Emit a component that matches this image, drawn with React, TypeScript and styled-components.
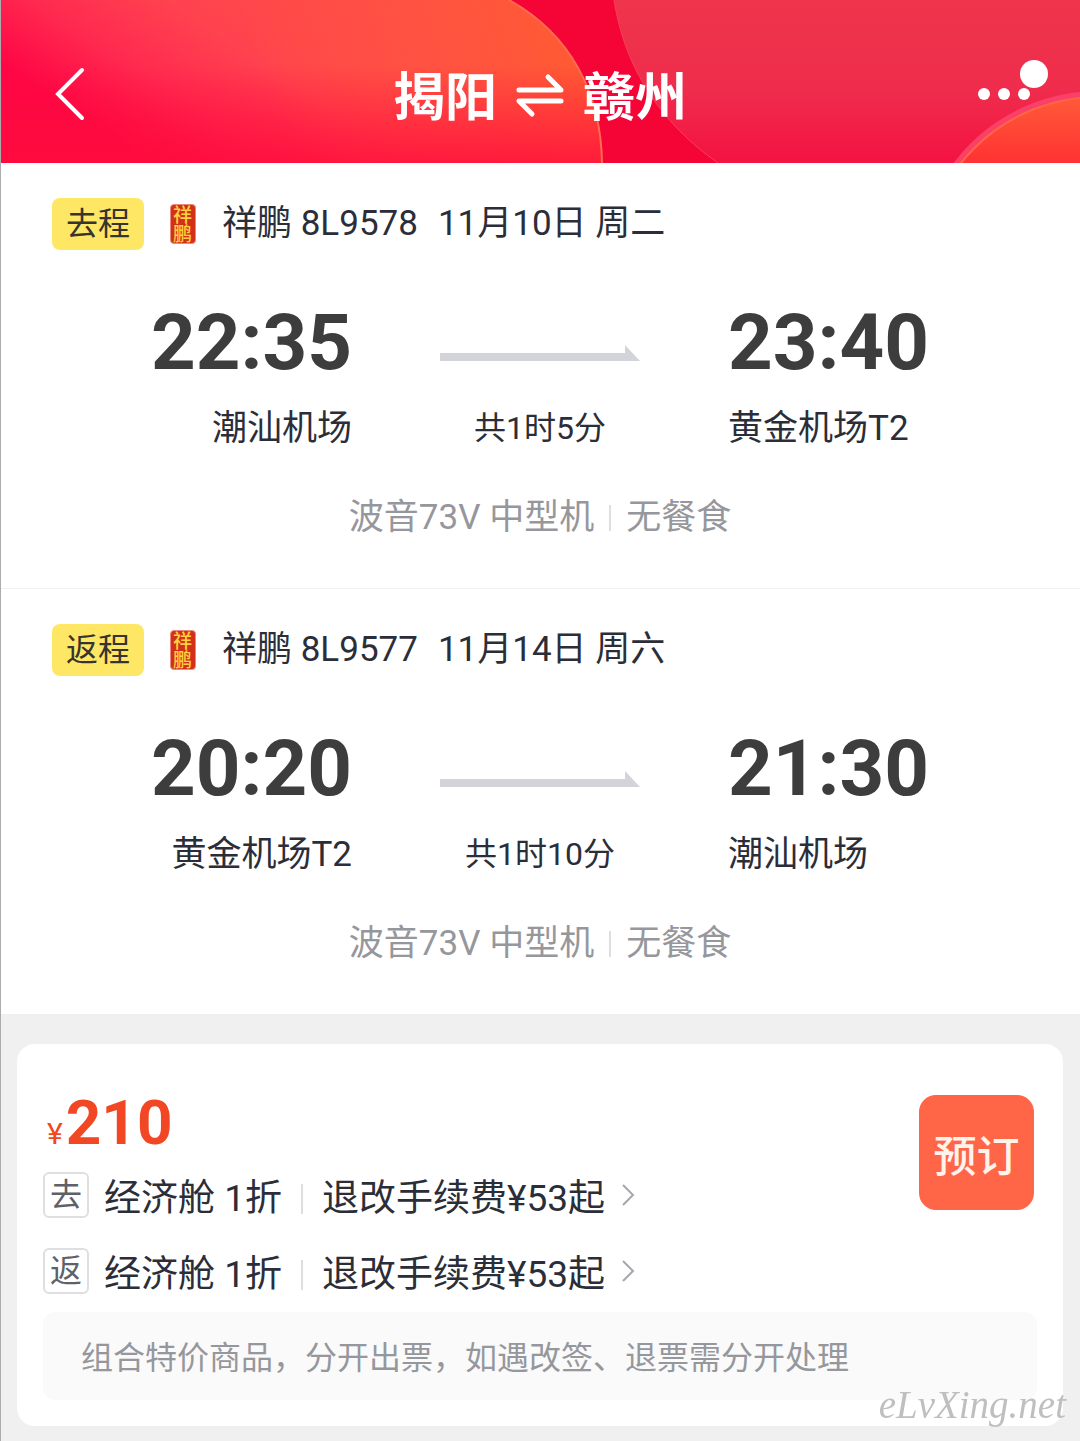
import React from "react";
import styled, { createGlobalStyle } from "styled-components";

const Global = createGlobalStyle`
  *, *::before, *::after { box-sizing: border-box; }
  html { background: #f0f0f0; }
  body { margin: 0; }
  body, button { font-family: Roboto, "Noto Sans CJK SC", sans-serif; }
  button { border: 0; padding: 0; background: none; color: inherit; cursor: pointer; }
  h1, h2, p { margin: 0; font-weight: 400; }
`;

const Page = styled.div`
  position: relative;
  min-height: 100vh;
  background: #f0f0f0;
  color: #2b2e38;

  &::before {
    content: "";
    position: absolute;
    inset: 0 auto 0 0;
    z-index: 1;
    width: 1px;
    background: #acacb0;
  }
`;

const Header = styled.header`
  position: relative;
  display: grid;
  grid-template-columns: 1fr auto 1fr;
  align-items: center;
  height: 163px;
  padding: 34px 32px 0;
  overflow: hidden;
  background: #f50436;
  color: #fff;
`;

const Backdrop = styled.svg`
  position: absolute;
  inset: 0;
  width: 100%;
  height: 100%;
`;

const BackButton = styled.button`
  position: relative;
  justify-self: start;
  display: flex;
`;

const Title = styled.h1`
  position: relative;
  display: flex;
  align-items: center;
  gap: 18px;
  font-size: 52px;
  line-height: 60px;
  font-weight: 700;
`;

const MoreButton = styled.button`
  position: relative;
  justify-self: end;
  display: flex;
`;

const Leg = styled.section`
  display: flex;
  flex-direction: column;
  height: 426px;
  border-bottom: 1px solid #eef0f1;
  background: #fff;
`;

const LegHead = styled.div`
  display: flex;
  align-items: center;
  padding: 35px 52px 0;
`;

const Tag = styled.span`
  padding: 1px 14px 0;
  border-radius: 8px;
  background: #fee765;
  color: #35342e;
  font-size: 32px;
  line-height: 51px;
`;

const Seal = styled.span`
  width: 26px;
  height: 40px;
  margin: 0 26px;
  border: 1px solid #e98a7c;
  border-radius: 4px;
  background: #d3301c;
  color: #ffd23c;
  font-size: 19px;
  line-height: 29px;
  font-weight: 500;
  writing-mode: vertical-rl;
`;

const FlightName = styled.h2`
  display: flex;
  gap: 20px;
  font-size: 35px;
  line-height: 48px;
`;

const Route = styled.div`
  display: grid;
  grid-template-columns: 1fr 200px 1fr;
  column-gap: 88px;
  padding-top: 47px;
`;

const Stop = styled.div<{ $end?: boolean }>`
  text-align: ${(p) => (p.$end ? "left" : "right")};
`;

const Time = styled.p`
  color: #3d3d3d;
  font-size: 78px;
  line-height: 92px;
  font-weight: 700;
`;

const Airport = styled.p`
  padding-top: 16px;
  font-size: 35px;
  line-height: 48px;
`;

const Middle = styled.div`
  display: flex;
  flex-direction: column;
  align-items: center;
  padding-top: 48px;
`;

const Duration = styled.p`
  padding-top: 43px;
  font-size: 32px;
  line-height: 48px;
  white-space: nowrap;
`;

const Plane = styled.p`
  display: flex;
  justify-content: center;
  align-items: center;
  gap: 15px;
  padding-top: 41px;
  color: #96979c;
  font-size: 35px;
  line-height: 48px;
`;

const Rule = styled.span<{ $tall?: boolean }>`
  width: 2px;
  height: ${(p) => (p.$tall ? 30 : 26)}px;
  background: #dddee2;
`;

const Card = styled.main`
  margin: 29px 17px 15px;
  padding: 51px 26px 26px;
  border-radius: 18px;
  background: #fff;
`;

const Offer = styled.div`
  display: flex;
  justify-content: space-between;
`;

const Price = styled.p`
  padding: 0 0 6px 4px;
  color: #f24724;
  font-size: 62px;
  line-height: 56px;
  font-weight: 700;
`;

const Yen = styled.span`
  margin-right: 3px;
  font-size: 30px;
  line-height: 30px;
  font-weight: 400;
`;

const Fare = styled.button`
  display: flex;
  align-items: center;
  height: 76px;
`;

const FareTag = styled.span`
  width: 46px;
  height: 46px;
  margin-right: 15px;
  border: 2px solid #dddfe3;
  border-radius: 6px;
  color: #5f6168;
  font-size: 32px;
  line-height: 42px;
  text-align: center;
`;

const FareText = styled.span`
  display: flex;
  align-items: center;
  gap: 19px;
  padding-top: 8px;
  font-size: 37px;
  line-height: 52px;
`;

const Chevron = styled.svg`
  margin-left: 16px;
`;

const BookButton = styled.button`
  width: 115px;
  height: 115px;
  margin-right: 3px;
  border-radius: 17px;
  background: #ff6648;
  color: #fff3ec;
  font-size: 43px;
  font-weight: 500;
`;

const Notice = styled.p`
  margin-top: 3px;
  padding: 22px 38px 18px;
  border-radius: 12px;
  background: #fafafa;
  color: #96979c;
  font-size: 32px;
  line-height: 48px;
`;

const Watermark = styled.span`
  position: fixed;
  right: 14px;
  bottom: 12px;
  color: #bfbfbf;
  font-family: "Liberation Serif", serif;
  font-style: italic;
  font-size: 39px;
  line-height: 48px;
`;

type LegInfo = {
  tag: string;
  flight: string;
  date: string;
  from: [string, string];
  to: [string, string];
  duration: string;
};

const legs: LegInfo[] = [
  {
    tag: "去程",
    flight: "祥鹏 8L9578",
    date: "11月10日 周二",
    from: ["22:35", "潮汕机场"],
    to: ["23:40", "黄金机场T2"],
    duration: "共1时5分",
  },
  {
    tag: "返程",
    flight: "祥鹏 8L9577",
    date: "11月14日 周六",
    from: ["20:20", "黄金机场T2"],
    to: ["21:30", "潮汕机场"],
    duration: "共1时10分",
  },
];

function HeaderArt() {
  return (
    <Backdrop viewBox="0 0 1080 163" preserveAspectRatio="xMidYMid slice" aria-hidden="true">
      <defs>
        <linearGradient id="orb" gradientUnits="userSpaceOnUse" x1="130" y1="150" x2="230" y2="0">
          <stop offset="0" stopColor="#fe0645" />
          <stop offset=".4" stopColor="#ff2a4f" />
          <stop offset=".8" stopColor="#ff424f" />
          <stop offset="1" stopColor="#ff464c" />
        </linearGradient>
        <linearGradient id="warm" gradientUnits="userSpaceOnUse" x1="270" y1="110" x2="560" y2="20">
          <stop offset="0" stopColor="#ff5a3c" stopOpacity="0" />
          <stop offset=".5" stopColor="#ff583e" stopOpacity=".65" />
          <stop offset="1" stopColor="#ff5a34" />
        </linearGradient>
        <linearGradient id="base" x1="0" y1="0" x2="0" y2="1">
          <stop offset=".4" stopColor="#ff0c3c" stopOpacity="0" />
          <stop offset="1" stopColor="#ff0c3c" stopOpacity=".8" />
        </linearGradient>
        <linearGradient id="rose" x1="0" y1="0" x2="0" y2="1">
          <stop offset="0" stopColor="#ee354b" />
          <stop offset=".55" stopColor="#ef2c4c" />
          <stop offset="1" stopColor="#f41242" />
        </linearGradient>
        <linearGradient id="corner" x1="0" y1="0" x2="0" y2="1">
          <stop offset="0" stopColor="#ff5a38" />
          <stop offset=".22" stopColor="#ff2b32" />
        </linearGradient>
      </defs>
      <path d="M0 0H509C570 34 601 92 602 163H0Z" fill="url(#orb)" />
      <path d="M0 0H509C570 34 601 92 602 163H0Z" fill="url(#warm)" />
      <path d="M0 0H509C570 34 601 92 602 163H0Z" fill="url(#base)" />
      <path d="M509 0C570 34 601 92 602 163" fill="none" stroke="#ff6a50" strokeWidth="2" />
      <path d="M614 0C625 70 662 124 718 163H1080V0Z" fill="url(#rose)" />
      <path d="M614 0C625 70 662 124 718 163" fill="none" stroke="#f5405a" strokeWidth="1" />
      <circle cx="1098" cy="272" r="181" fill="#fb4068" />
      <circle cx="1098" cy="272" r="175" fill="url(#corner)" stroke="#ff6548" strokeWidth="2" />
    </Backdrop>
  );
}

function LegPanel({ leg }: { leg: LegInfo }) {
  return (
    <Leg>
      <LegHead>
        <Tag>{leg.tag}</Tag>
        <Seal>祥鹏</Seal>
        <FlightName>
          <span>{leg.flight}</span>
          <span>{leg.date}</span>
        </FlightName>
      </LegHead>
      <Route>
        <Stop>
          <Time>{leg.from[0]}</Time>
          <Airport>{leg.from[1]}</Airport>
        </Stop>
        <Middle>
          <svg width="200" height="16" viewBox="0 0 200 16" aria-hidden="true">
            <path d="M0 8H185V0L200 16H0Z" fill="#d3d3da" />
          </svg>
          <Duration>{leg.duration}</Duration>
        </Middle>
        <Stop $end>
          <Time>{leg.to[0]}</Time>
          <Airport>{leg.to[1]}</Airport>
        </Stop>
      </Route>
      <Plane>
        波音73V 中型机
        <Rule />
        无餐食
      </Plane>
    </Leg>
  );
}

export default function App() {
  return (
    <Page>
      <Global />
      <Header>
        <HeaderArt />
        <BackButton aria-label="返回">
          <svg width="64" height="70" viewBox="0 0 64 70" fill="none" stroke="#fff" strokeWidth="4">
            <path d="M50 6L26 30L50 54" strokeLinecap="round" />
          </svg>
        </BackButton>
        <Title>
          揭阳
          <svg
            width="50"
            height="54"
            viewBox="0 0 50 54"
            fill="none"
            stroke="#fff"
            strokeWidth="5"
            strokeLinecap="round"
            strokeLinejoin="round"
          >
            <path d="M4 18H46L33 5M46 29H4L17 42" />
          </svg>
          赣州
        </Title>
        <MoreButton aria-label="更多">
          <svg width="70" height="84" viewBox="0 0 70 84" fill="#fff">
            <circle cx="6" cy="37" r="6" />
            <circle cx="26" cy="37" r="6" />
            <circle cx="46" cy="37" r="6" />
            <circle cx="56" cy="17" r="14" />
          </svg>
        </MoreButton>
      </Header>
      {legs.map((leg) => (
        <LegPanel key={leg.tag} leg={leg} />
      ))}
      <Card>
        <Offer>
          <div>
            <Price>
              <Yen>¥</Yen>210
            </Price>
            {["去", "返"].map((way) => (
              <Fare key={way}>
                <FareTag>{way}</FareTag>
                <FareText>
                  经济舱 1折
                  <Rule $tall />
                  退改手续费¥53起
                </FareText>
                <Chevron width="14" height="24" viewBox="0 0 14 24" fill="none" stroke="#a6a7ac" strokeWidth="2">
                  <path d="M2 2L12 12L2 22" />
                </Chevron>
              </Fare>
            ))}
          </div>
          <BookButton>预订</BookButton>
        </Offer>
        <Notice>组合特价商品，分开出票，如遇改签、退票需分开处理</Notice>
      </Card>
      <Watermark>eLvXing.net</Watermark>
    </Page>
  );
}
